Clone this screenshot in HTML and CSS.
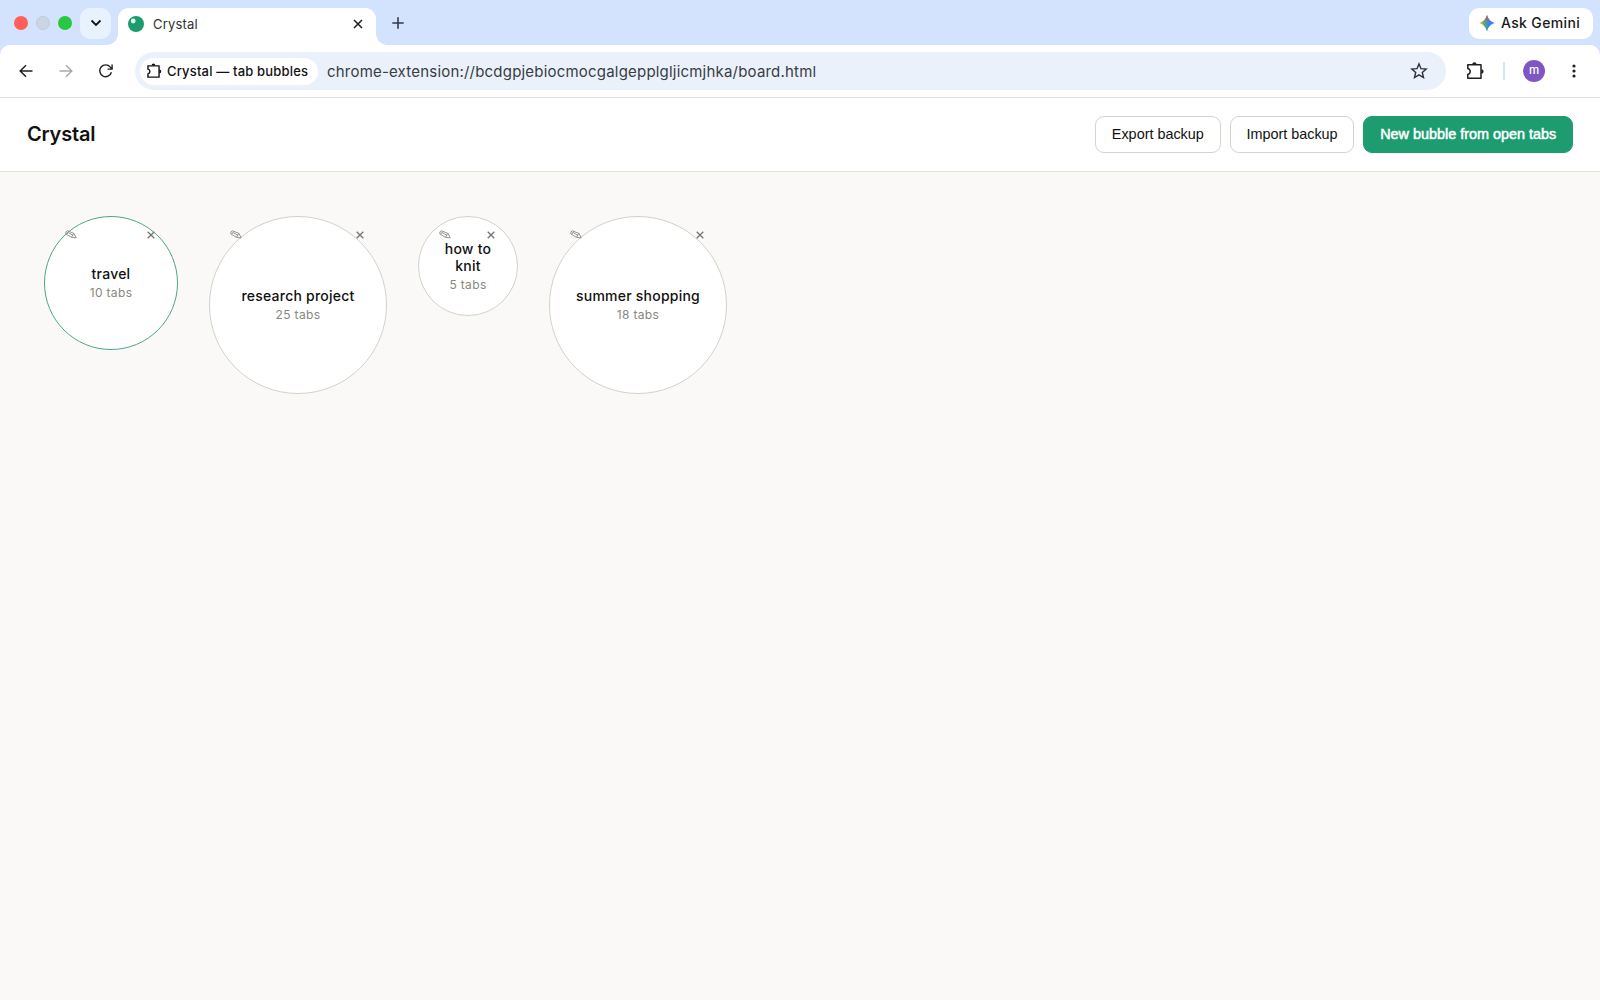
FILE: index.html
```html
<!DOCTYPE html>
<html lang="en">
<head>
  <meta charset="UTF-8">
  <title>Crystal</title>
  <link rel="stylesheet" href="styles.css">
</head>
<body>
  <div class="tab-strip">
    <span class="light red"></span>
    <span class="light grey"></span>
    <span class="light green"></span>
    <button class="tab-search">
      <svg width="12" height="8" viewBox="0 0 12 8"><path d="M1.5 1.5 6 6l4.5-4.5" fill="none" stroke="#111" stroke-width="1.8"/></svg>
    </button>
    <div class="tab">
      <svg class="favicon" width="16" height="16" viewBox="0 0 16 16"><circle cx="8" cy="8" r="8" fill="#1d9c70"/><circle cx="5.2" cy="5" r="2.4" fill="#d9f7ea"/></svg>
      <span class="tab-title">Crystal</span>
      <svg class="tab-close" width="10" height="10" viewBox="0 0 10 10"><path d="M1 1l8 8M9 1L1 9" stroke="#1b1b1b" stroke-width="1.5"/></svg>
    </div>
    <svg class="new-tab" width="12" height="12" viewBox="0 0 12 12"><path d="M6 .3v11.4M.3 6h11.4" stroke="#333b49" stroke-width="1.6"/></svg>
    <button class="gemini">
      <svg width="16" height="16" viewBox="0 0 16 16">
        <defs>
          <linearGradient id="spark" x1="0" y1=".5" x2="1" y2=".5">
            <stop offset="0" stop-color="#f3bd2c"/>
            <stop offset=".35" stop-color="#5aa878"/>
            <stop offset=".6" stop-color="#3c82f0"/>
            <stop offset="1" stop-color="#3186ff"/>
          </linearGradient>
          <linearGradient id="sparkTop" x1="0" y1="0" x2="0" y2="1">
            <stop offset="0" stop-color="#f04438"/>
            <stop offset=".45" stop-color="#f04438" stop-opacity="0"/>
            <stop offset=".65" stop-color="#22b05a" stop-opacity="0"/>
            <stop offset="1" stop-color="#22b05a"/>
          </linearGradient>
        </defs>
        <path d="M8 0C9.500 4.500 11.500 6.500 16 8 11.500 9.500 9.500 11.500 8 16 6.500 11.500 4.500 9.500 0 8 4.500 6.500 6.500 4.500 8 0z" fill="url(#spark)"/>
        <path d="M8 0C9.500 4.500 11.500 6.500 16 8 11.500 9.500 9.500 11.500 8 16 6.500 11.500 4.500 9.500 0 8 4.500 6.500 6.500 4.500 8 0z" fill="url(#sparkTop)"/>
      </svg>
      <span>Ask Gemini</span>
    </button>
  </div>

  <div class="toolbar">
    <svg class="nav-icon" width="14" height="14" viewBox="0 0 14 14"><path d="M13.500 7H1.500M7 1.200 1.200 7 7 12.800" fill="none" stroke="#222" stroke-width="1.5"/></svg>
    <svg class="nav-icon forward" width="14" height="14" viewBox="0 0 14 14"><path d="M.5 7h12M7 1.200 12.800 7 7 12.800" fill="none" stroke="#a9a9a9" stroke-width="1.5"/></svg>
    <svg class="nav-icon reload" width="14" height="14" viewBox="0 0 14 14"><path d="M12.400 8.300A5.900 5.900 0 1 1 11.300 3.100L13 5M13.100.6V5.100H8.600" fill="none" stroke="#222" stroke-width="1.4"/></svg>
    <div class="omnibox">
      <div class="chip">
        <svg width="16" height="16" viewBox="0 0 18 18"><path d="M2.200 3.200H14.700V15.900H2.200V12.200C5.100 11.400 5.100 7.600 2.200 6.900z" fill="none" stroke="#111" stroke-width="1.600" stroke-linejoin="round"/><path d="M6.300 2.800a2.100 2.100 0 0 1 4.200 0zM15 7.400a2.100 2.100 0 0 1 0 4.200z" fill="#111"/></svg>
        <span>Crystal — tab bubbles</span>
      </div>
      <span class="url">chrome-extension://bcdgpjebiocmocgalgepplgljicmjhka/board.html</span>
      <svg class="bookmark" width="18" height="18" viewBox="0 0 18 18"><path d="M9 1.900 11 6.700 16.200 7.100 12.300 10.500 13.500 15.600 9 12.900 4.500 15.600 5.700 10.500 1.800 7.100 7 6.700z" fill="none" stroke="#2b303b" stroke-width="1.4"/></svg>
    </div>
    <svg class="extensions" width="20" height="20" viewBox="0 0 20 20"><path d="M2.800 3.800H16V17.200H2.800V13.500C6 12.500 6 8.500 2.800 7.500z" fill="none" stroke="#1f1f1f" stroke-width="1.500" stroke-linejoin="round"/><path d="M7.200 3.400a2.200 2.200 0 0 1 4.400 0zM16.400 8.300a2.200 2.200 0 0 1 0 4.400z" fill="#1f1f1f"/></svg>
    <span class="divider"></span>
    <span class="avatar">m</span>
    <svg class="menu" width="4" height="14" viewBox="0 0 4 14"><circle cx="2" cy="2" r="1.600"/><circle cx="2" cy="7" r="1.600"/><circle cx="2" cy="12" r="1.600"/></svg>
  </div>

  <header class="header">
    <h1>Crystal</h1>
    <div class="actions">
      <button class="btn">Export backup</button>
      <button class="btn">Import backup</button>
      <button class="btn primary">New bubble from open tabs</button>
    </div>
  </header>

  <main class="board" id="board"></main>

  <script>
    const bubbles = [
      { name: 'travel', tabs: 10, size: 134, active: true },
      { name: 'research project', tabs: 25, size: 178 },
      { name: 'how to knit', tabs: 5, size: 100 },
      { name: 'summer shopping', tabs: 18, size: 178 }
    ];

    const pencil = '<svg width="12" height="9" viewBox="0 0 12 9"><path d="M2.300.8 8.800 3.300 11.300 7.900 6.400 7.300.8 3.900Q.4 1.200 2.300.8zM3.200 2.600 8.200 5.500M8.800 3.300 6.400 7.300M1.600 4.300 3.700 1.400" fill="none" stroke="#8b8984" stroke-width=".9"/></svg>';
    const cross = '<svg width="8" height="8" viewBox="0 0 8 8"><path d="M.7.7l6.600 6.600M7.300.7L.7 7.300" stroke="#77746f" stroke-width="1.300"/></svg>';

    const board = document.getElementById('board');
    bubbles.forEach((b) => {
      const div = document.createElement('div');
      div.className = b.active ? 'bubble active' : 'bubble';
      div.style.width = b.size + 'px';
      div.style.height = b.size + 'px';
      div.innerHTML = `
        <span class="edit">${pencil}</span>
        <span class="remove">${cross}</span>
        <div class="name">${b.name}</div>
        <div class="count">${b.tabs} tabs</div>
      `;
      board.appendChild(div);
    });
  </script>
</body>
</html>
```
FILE: styles.css
```css
* {
  box-sizing: border-box;
}

body {
  margin: 0;
  height: 100vh;
  overflow: hidden;
  background: #faf9f7;
  color: #111;
  font-family: Inter, "Liberation Sans", sans-serif;
}

button {
  font: inherit;
  border: none;
  margin: 0;
  padding: 0;
}

svg {
  display: block;
  flex: none;
}

/* browser chrome */
.tab-strip {
  display: flex;
  align-items: center;
  height: 45px;
  padding: 0 7px 0 14px;
  background: #d3e2fd;
}

.light {
  width: 14px;
  height: 14px;
  margin-right: 8px;
  border-radius: 50%;
}

.red { background: #ff5f57; }
.grey { background: #ccd5e2; border: 1px solid #c0cad8; }
.green { background: #28c840; }

.tab-search {
  display: flex;
  align-items: center;
  justify-content: center;
  width: 31px;
  height: 31px;
  margin-top: 2px;
  padding-bottom: 1px;
  border-radius: 10px;
  background: #e8f1fe;
}

.tab {
  position: relative;
  display: flex;
  align-items: center;
  align-self: flex-end;
  width: 258px;
  height: 37px;
  margin-left: 7px;
  padding: 0 13px 6px 10px;
  border-radius: 11px 11px 0 0;
  background: #fff;
}

/* curved feet of the active tab */
.tab::before,
.tab::after {
  content: "";
  position: absolute;
  bottom: 0;
  width: 11px;
  height: 11px;
}

.tab::before {
  left: -11px;
  background: radial-gradient(circle at 0 0, transparent 10.5px, #fff 11px);
}

.tab::after {
  right: -11px;
  background: radial-gradient(circle at 100% 0, transparent 10.5px, #fff 11px);
}

.tab-title {
  margin-left: 9px;
  font-size: 13px;
  letter-spacing: 0.2px;
  color: #333;
}

.tab-close {
  margin-left: auto;
}

.new-tab {
  margin-left: 16px;
  margin-top: 1px;
}

.gemini {
  display: flex;
  align-items: center;
  gap: 6px;
  width: 124px;
  height: 31px;
  margin-top: 2px;
  margin-left: auto;
  padding: 0 0 2px 10px;
  border-radius: 10px;
  background: #fff;
  color: #1a1a1a;
  font-size: 14px;
  font-weight: 450;
  letter-spacing: 0.35px;
  white-space: nowrap;
}

.toolbar {
  display: flex;
  align-items: center;
  height: 53px;
  padding: 0 24px 0 19px;
  border-bottom: 1px solid #e3e3e3;
  border-radius: 10px 10px 0 0;
  background: #fff;
  box-shadow: 0 -12px 0 #d3e2fd;
  clip-path: inset(0);
}

.forward { margin-left: 26px; }
.reload { margin-left: 26px; }

.omnibox {
  display: flex;
  align-items: center;
  width: 1311px;
  height: 38px;
  margin-left: 22px;
  padding: 0 18px 0 5px;
  border-radius: 19px;
  background: #ebf1fa;
}

.chip {
  display: flex;
  align-items: center;
  gap: 5px;
  width: 178px;
  height: 27px;
  padding-left: 6px;
  border-radius: 14px;
  background: #fff;
  font-size: 13px;
  font-weight: 450;
  letter-spacing: 0.17px;
  white-space: nowrap;
}

.url {
  margin-left: 9px;
  font-size: 15px;
  letter-spacing: 0.2px;
  color: #383c44;
}

.bookmark {
  margin-left: auto;
}

.extensions {
  margin-left: 19px;
}

.divider {
  width: 2px;
  height: 18px;
  margin-left: 18px;
  background: #d3e2fd;
}

.avatar {
  width: 22px;
  height: 22px;
  margin-left: 18px;
  border-radius: 50%;
  background: #7e57c2;
  color: #fff;
  font-size: 11.5px;
  font-weight: 500;
  line-height: 21px;
  text-align: center;
}

.menu {
  margin-left: auto;
  fill: #222;
}

/* page header */
.header {
  display: flex;
  align-items: center;
  justify-content: space-between;
  height: 74px;
  padding: 0 27px 1px;
  border-bottom: 1px solid #e6e3dd;
  background: #fff;
}

h1 {
  margin: 0;
  font-size: 20px;
  font-weight: 600;
  letter-spacing: -0.2px;
}

.actions {
  display: flex;
  gap: 9px;
}

.btn {
  height: 37px;
  padding: 0 15.8px 1px;
  border: 1px solid #d6d3cd;
  border-radius: 9px;
  background: #fff;
  color: #111;
  font-family: "Liberation Sans", Arial, sans-serif;
  font-size: 14.4px;
}

.primary {
  border-color: #1d9c70;
  background: #1d9c70;
  color: #fff;
  -webkit-text-stroke: 0.5px #fff;
}

/* bubbles */
.board {
  display: flex;
  align-items: flex-start;
  gap: 31px;
  padding: 44px;
}

.bubble {
  position: relative;
  display: flex;
  flex-direction: column;
  align-items: center;
  justify-content: center;
  padding: 0 18px;
  border: 1px solid #d3d1c9;
  border-radius: 50%;
  background: #fff;
  text-align: center;
}

.bubble.active {
  border-color: #4fa585;
}

.name {
  font-size: 14px;
  font-weight: 450;
  letter-spacing: 0.23px;
  line-height: 17px;
}

.count {
  margin-top: 3px;
  font-size: 12px;
  letter-spacing: 0.35px;
  line-height: 16px;
  color: #888780;
}

.edit,
.remove {
  position: absolute;
  top: 13px;
}

.edit { left: 20px; }
.remove { right: 22px; top: 14px; }
```
